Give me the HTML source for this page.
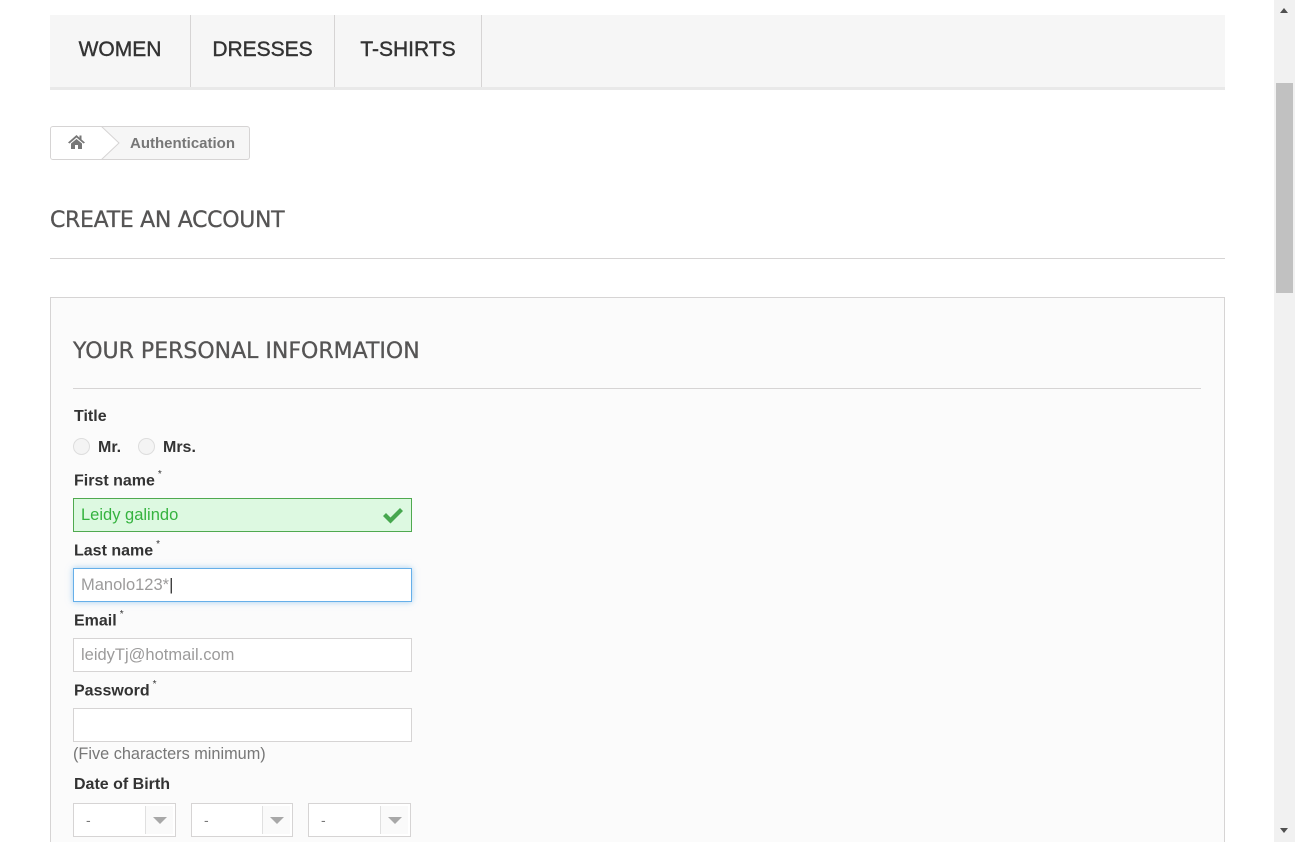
<!DOCTYPE html>
<html><head><style>
*{box-sizing:border-box;margin:0;padding:0}
body{width:1295px;height:842px;overflow:hidden;background:#fff;font-family:"Liberation Sans",Arial,sans-serif;position:relative}
.abs{position:absolute}
.nav{left:50px;top:15px;width:1175px;height:75px;background:#f6f6f6;border-bottom:3px solid #e9e9e9}
.nav div{position:absolute;top:0;height:72px;border-right:1px solid #d6d4d4;font-family:"Liberation Sans",sans-serif;font-size:21px;color:#333;-webkit-text-stroke:0.4px #333;line-height:70px;text-align:center}
.bc{left:50px;top:126px;width:200px;height:34px;border:1px solid #d6d4d4;border-radius:3px;background:#f6f6f6;overflow:hidden}
h1,h3{position:absolute;font-family:"DejaVu Sans","Liberation Sans",sans-serif;font-weight:normal;color:#555454;font-size:22px;letter-spacing:-0.3px;-webkit-text-stroke:0.3px #555454}
.lbl{position:absolute;left:74px;font-weight:bold;font-size:16px;color:#333}
.lbl sup{font-weight:normal;font-size:10px;color:#333;position:relative;top:-2px;margin-left:3px}
.inp{position:absolute;left:73px;width:339px;height:34px;border:1px solid #d6d4d4;background:#fff;font-size:16.5px;color:#9c9b9b;padding-left:7px;line-height:32px}
.sel{position:absolute;top:803px;height:34px;border:1px solid #d6d4d4;background:#fff;color:#777;font-size:14px;line-height:32px;padding-left:12px}
.sel span{position:absolute;right:2px;top:2px;width:28px;height:28px;border-left:1px solid #e0e0e0;background:#fafafa}
.sel span:after{content:"";position:absolute;left:7px;top:11px;border-left:7px solid transparent;border-right:7px solid transparent;border-top:7px solid #a8a8a8}
.radio{position:absolute;top:438px;width:17px;height:17px;border-radius:50%;border:1px solid #ddd;background:#f4f4f4}
</style></head><body>
<div class="abs nav">
<div style="left:0;width:141px">WOMEN</div>
<div style="left:141px;width:144px">DRESSES</div>
<div style="left:285px;width:147px">T-SHIRTS</div>
</div>
<div class="abs bc">
<div class="abs" style="left:0;top:0;width:52px;height:32px;background:#fff"></div>
<svg class="abs" style="left:50px;top:-1px" width="20" height="34"><path d="M0 0 L18 17 L0 34" fill="#fff" stroke="#d6d4d4"/></svg>
<svg class="abs" style="left:16px;top:7px" width="19" height="16" viewBox="0 0 19 16"><path d="M9.5 1 L1 8.5 L2.5 9.5 L9.5 3.5 L16.5 9.5 L18 8.5 L14.5 5.5 L14.5 1.5 L12.5 1.5 L12.5 3.8 Z M4 9.5 L4 15 L8 15 L8 11 L11 11 L11 15 L15 15 L15 9.5 L9.5 5 Z" fill="#777"/></svg>
<div class="abs" style="left:79px;top:8px;font-size:15px;font-weight:bold;color:#777">Authentication</div>
</div>
<h1 style="left:50px;top:208px">CREATE AN ACCOUNT</h1>
<div class="abs" style="left:50px;top:258px;width:1175px;height:1px;background:#d6d4d4"></div>
<div class="abs" style="left:50px;top:297px;width:1175px;height:545px;border:1px solid #d6d4d4;border-bottom:none;background:#fbfbfb"></div>
<h3 style="left:73px;top:339px;letter-spacing:0">YOUR PERSONAL INFORMATION</h3>
<div class="abs" style="left:73px;top:388px;width:1128px;height:1px;background:#d6d4d4"></div>
<div class="lbl" style="top:408px">Title</div>
<div class="radio" style="left:73px"></div><div class="lbl" style="left:98px;top:439px">Mr.</div>
<div class="radio" style="left:138px"></div><div class="lbl" style="left:163px;top:439px">Mrs.</div>
<div class="lbl" style="top:471px">First name<sup>*</sup></div>
<div class="inp" style="top:498px;border-color:#4fa94f;background:#ddf9e1;color:#35b33f">Leidy galindo
<svg class="abs" style="right:6px;top:7px" width="24" height="19" viewBox="0 0 24 19"><path d="M2 10 L5 7 L9.5 11.5 L19 2 L22 5 L9.5 17.5 Z" fill="#46a74e"/></svg></div>
<div class="lbl" style="top:541px">Last name<sup>*</sup></div>
<div class="inp" style="top:568px;border-color:#66afe9;box-shadow:0 0 6px rgba(102,175,233,.6)">Manolo123*<span style="color:#333">|</span></div>
<div class="lbl" style="top:611px">Email<sup>*</sup></div>
<div class="inp" style="top:638px">leidyTj@hotmail.com</div>
<div class="lbl" style="top:681px">Password<sup>*</sup></div>
<div class="inp" style="top:708px"></div>
<div class="abs" style="left:73px;top:745px;font-size:16.3px;color:#777">(Five characters minimum)</div>
<div class="lbl" style="top:776px">Date of Birth</div>
<div class="sel" style="left:73px;width:103px">-<span></span></div>
<div class="sel" style="left:191px;width:102px">-<span></span></div>
<div class="sel" style="left:308px;width:103px">-<span></span></div>
<div class="abs" style="left:1274px;top:0;width:21px;height:842px;background:#f1f1f1"></div>
<div class="abs" style="left:1276px;top:83px;width:17px;height:210px;background:#c1c1c1"></div>
<div class="abs" style="left:1280px;top:8px;border-left:4px solid transparent;border-right:4px solid transparent;border-bottom:5px solid #505050"></div>
<div class="abs" style="left:1280px;top:828px;border-left:4px solid transparent;border-right:4px solid transparent;border-top:5px solid #505050"></div>
</body></html>
